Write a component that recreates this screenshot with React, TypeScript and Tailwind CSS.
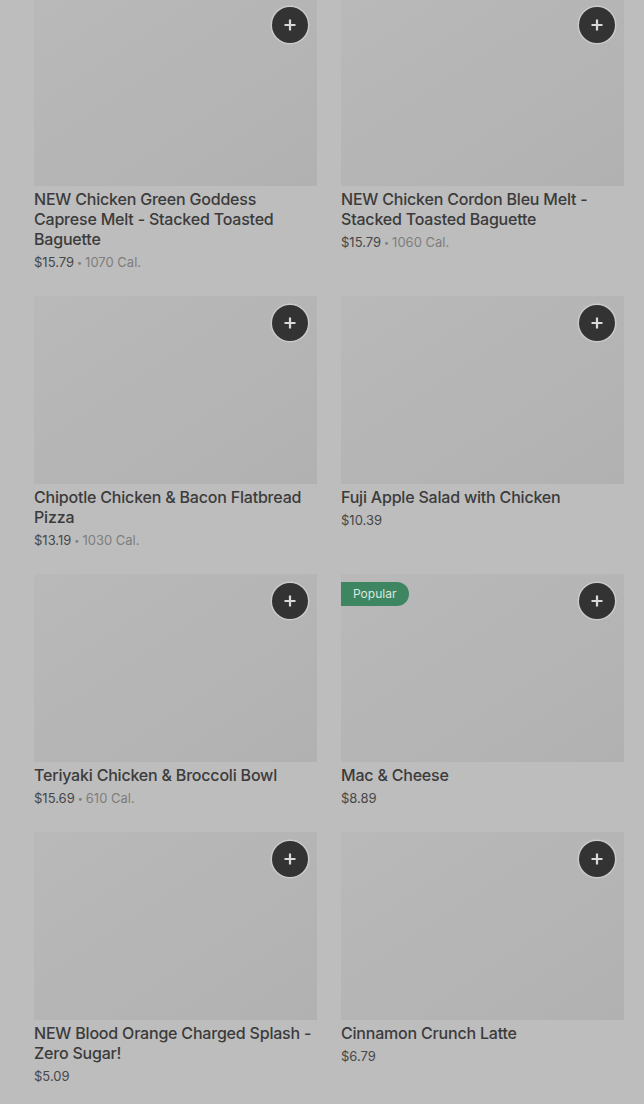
import React from "react";

type Item = {
  name: string;
  price: string;
  cal?: string;
  popular?: boolean;
};

const items: Item[] = [
  { name: "NEW Chicken Green Goddess Caprese Melt - Stacked Toasted Baguette", price: "$15.79", cal: "1070 Cal." },
  { name: "NEW Chicken Cordon Bleu Melt - Stacked Toasted Baguette", price: "$15.79", cal: "1060 Cal." },
  { name: "Chipotle Chicken & Bacon Flatbread Pizza", price: "$13.19", cal: "1030 Cal." },
  { name: "Fuji Apple Salad with Chicken", price: "$10.39" },
  { name: "Teriyaki Chicken & Broccoli Bowl", price: "$15.69", cal: "610 Cal." },
  { name: "Mac & Cheese", price: "$8.89", popular: true },
  { name: "NEW Blood Orange Charged Splash - Zero Sugar!", price: "$5.09" },
  { name: "Cinnamon Crunch Latte", price: "$6.79" },
];

function PlusButton() {
  return (
    <button className="absolute top-[9px] right-[9px] w-9 h-9 rounded-full bg-[#333333] flex items-center justify-center shadow-[0_0_0_1.5px_rgba(220,220,220,0.55)]">
      <svg width="14" height="14" viewBox="0 0 14 14">
        <path d="M7 1.5v11M1.5 7h11" stroke="#d9d9d9" strokeWidth="2.2" />
      </svg>
    </button>
  );
}

function Card({ item }: { item: Item }) {
  return (
    <div className="flex flex-col">
      <div className="relative h-[188px] bg-gradient-to-br from-[#b9b9b9] to-[#b1b1b1]">
        {item.popular && (
          <div className="absolute left-0 top-2 h-6 pl-3 pr-[13px] flex items-center rounded-r-full bg-[#3e8662] text-[12px] text-[#dbe7df]">
            Popular
          </div>
        )}
        <PlusButton />
      </div>
      <div className="mt-[3px] text-[16px] leading-5 font-medium tracking-[-0.2px] text-[#3b3b3b]">
        {item.name}
      </div>
      <div className="mt-[3px] h-5 flex items-center text-[13px] leading-5 text-[#474747]">
        <span>{item.price}</span>
        {item.cal && (
          <>
            <span className="mx-[3px] text-[9px] leading-none text-[#7e7e7e]">•</span>
            <span className="text-[#7e7e7e]">{item.cal}</span>
          </>
        )}
      </div>
    </div>
  );
}

export default function App() {
  return (
    <div
      className="min-h-[1104px] bg-[#bdbdbd] pl-[34px] pr-[20px] overflow-hidden"
      style={{ fontFamily: "Inter, 'Noto Sans', sans-serif" }}
    >
      <div className="-mt-[2px] grid grid-cols-2 gap-x-6 gap-y-6 pb-10">
        {items.map((item, i) => (
          <Card key={i} item={item} />
        ))}
      </div>
    </div>
  );
}
